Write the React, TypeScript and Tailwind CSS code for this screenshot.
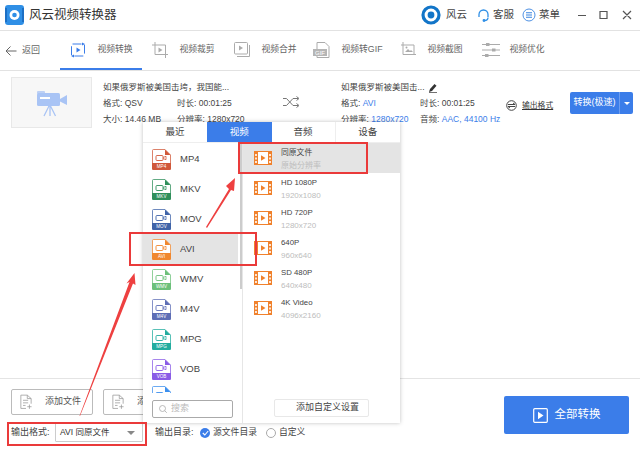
const cjk = "font-['Liberation_Sans','Noto_Sans_CJK_SC',sans-serif]";

function FileIcon({ color, label }: { color: string; label: string }) {
  return (
    <svg width="19" height="21" viewBox="0 0 19 21" className="shrink-0">
      <path d="M.5 1.500a1 1 0 0 1 1-1H13L18.500 6v13.500a1 1 0 0 1-1 1h-16a1 1 0 0 1-1-1Z" fill="#fff" stroke={color} strokeOpacity="0.75" />
      <path d="M13 .5V6h5.500Z" fill={color} />
      <path d="M0 14h19v5.500a1.500 1.500 0 0 1-1.500 1.500h-16A1.500 1.500 0 0 1 0 19.500Z" fill={color} />
      <rect x="4" y="6.500" width="7" height="5" rx="1" fill="none" stroke={color} strokeWidth="0.9" />
      <path d="M11 8.500l3-1.200v3.400l-3-1.200" fill="none" stroke={color} strokeWidth="0.8" />
      <text x="9.500" y="19.300" textAnchor="middle" fontSize="4.600" fill="#fff" fontFamily="Liberation Sans">{label}</text>
    </svg>
  );
}

function FilmIcon() {
  return (
    <svg width="18" height="14" viewBox="0 0 18 14" className="shrink-0">
      <rect x="0.500" y="0.500" width="17" height="13" rx="1" fill="#fff" stroke="#f0812c" />
      <path d="M0 0h4v14H0zM14 0h4v14h-4z" fill="#f0812c" />
      <path d="M1.200 3h1.600v2H1.200zM1.200 6.500h1.600v2H1.200zM1.200 10h1.600v2H1.200zM15.200 3h1.600v2h-1.600zM15.200 6.500h1.600v2h-1.600zM15.200 10h1.600v2h-1.600z" fill="#fff" />
      <path d="M7 4.200l4.500 2.800L7 9.800Z" fill="#f0812c" />
    </svg>
  );
}

function ToolIcon({ kind }: { kind: string }) {
  const c = "#ababab";
  return (
    <svg width="20" height="18" viewBox="0 0 20 18" fill="none" stroke={c} strokeWidth="1" className="shrink-0">
      {kind === "convert" && (<>
        <rect x="2.500" y="3" width="13" height="12" rx="1" stroke="#3b7de9" strokeDasharray="9 3" />
        <path d="M7.500 6.500l4 2.500-4 2.500Z" fill="#3b7de9" stroke="none" />
        <path d="M13 1.500l3 1.500-3 1.500ZM5 13.500l-3 1.500 3 1.500Z" fill="#3b7de9" stroke="none" />
      </>)}
      {kind === "crop" && (<>
        <path d="M4 1v12.500h13M1 4h13.500v13" />
        <path d="M7.500 6.500l4 2.500-4 2.500Z" fill={c} stroke="none" />
      </>)}
      {kind === "merge" && (<>
        <rect x="1.500" y="1.500" width="13" height="11.500" rx="1" />
        <path d="M4 15.500h12.500V4" />
        <path d="M6 4.500l4 2.500-4 2.500Z" fill={c} stroke="none" />
      </>)}
      {kind === "gif" && (<>
        <path d="M4 8V1.500h8l4 4V16.500H4V14" />
        <rect x="0" y="8" width="14" height="7" fill="#b5b5b5" stroke="none" />
        <text x="7" y="14" textAnchor="middle" fontSize="6" fill="#fff" stroke="none" fontFamily="Liberation Sans">GIF</text>
      </>)}
      {kind === "shot" && (<>
        <path d="M4 1v12.500h13M2 4h13v9" />
        <path d="M6 11l3-3 2 2 1-1 2 2Z" fill={c} stroke="none" />
        <circle cx="7.500" cy="6.500" r="1" fill={c} stroke="none" />
      </>)}
      {kind === "opt" && (<>
        <path d="M1 3.500h18M1 9h18M1 14.500h18" />
        <rect x="5" y="2" width="3.500" height="3" fill={c} stroke="none" />
        <rect x="11" y="7.500" width="3.500" height="3" fill={c} stroke="none" />
        <rect x="4" y="13" width="3.500" height="3" fill={c} stroke="none" />
      </>)}
    </svg>
  );
}

function AddFileIcon() {
  return (
    <svg width="12" height="18" viewBox="0 0 14 18" fill="none" stroke="#9a9a9a" strokeWidth="0.9" className="shrink-0">
      <path d="M7 16.500H1V1h7.500L13 5v6" />
      <path d="M8.500 1v4H13M3.500 7h6M3.500 10h6M3.500 13h3M11 12v5M8.500 14.500h5" />
    </svg>
  );
}

const tools = [
  { k: "convert", t: "视频转换", w: "w-[82px]", on: true },
  { k: "crop", t: "视频裁剪", w: "w-[82px]" },
  { k: "merge", t: "视频合并", w: "w-[82px]" },
  { k: "gif", t: "视频转GIF", w: "w-[84px]" },
  { k: "shot", t: "视频截图", w: "w-[82px]" },
  { k: "opt", t: "视频优化", w: "w-[82px]" },
];

const formats = [
  { l: "MP4", c: "#d0583a" },
  { l: "MKV", c: "#2f8f5b" },
  { l: "MOV", c: "#3f63a8" },
  { l: "AVI", c: "#f0872e", on: true },
  { l: "WMV", c: "#6cc07a" },
  { l: "M4V", c: "#5d6db5" },
  { l: "MPG", c: "#22ac9f" },
  { l: "VOB", c: "#8a5ce6" },
];

const presets = [
  { a: "同原文件", b: "原始分辨率", on: true },
  { a: "HD 1080P", b: "1920x1080" },
  { a: "HD 720P", b: "1280x720" },
  { a: "640P", b: "960x640" },
  { a: "SD 480P", b: "640x480" },
  { a: "4K Video", b: "4096x2160" },
];

export default function App() {
  return (
    <div className={`relative w-[640px] h-[450px] overflow-hidden bg-white flex flex-col text-[9px] text-[#444] ${cjk}`}>
      {/* title bar */}
      <header className="h-[31px] shrink-0 flex items-center border-b border-[#e2e2e2] pl-[5px]">
        <svg width="19" height="20" viewBox="0 0 19 20" className="shrink-0">
          <rect width="19" height="20" rx="3" fill="#2f8fe6" />
          <path d="M0 3h2v14H0zM17 3h2v14h-2z" fill="#1c6fc4" />
          <circle cx="9.500" cy="10" r="5" fill="#fff" />
          <circle cx="9.500" cy="10" r="2.300" fill="#2f8fe6" />
        </svg>
        <span className="ml-[5px] text-[12.500px] text-[#333]">风云视频转换器</span>
        <div className="ml-auto flex items-center">
          <svg width="20" height="20" viewBox="0 0 20 20" className="mr-[5px]">
            <circle cx="10" cy="10" r="8" fill="#fff" stroke="#1275c8" strokeWidth="3.200" />
            <circle cx="10" cy="10" r="3.400" fill="#1275c8" />
          </svg>
          <span className="text-[10.500px] mr-[10px]">风云</span>
          <svg width="13" height="14" viewBox="0 0 13 14" fill="none" stroke="#2f8fe6" strokeWidth="1.300" className="mr-[3px]">
            <path d="M2 9V6.500a4.500 4.500 0 0 1 9 0V9" />
            <path d="M11 9.500c0 2-1.500 3-3.500 3" />
            <circle cx="7" cy="12.500" r="0.800" fill="#2f8fe6" />
          </svg>
          <span className="text-[10.500px] mr-[8px]">客服</span>
          <svg width="14" height="14" viewBox="0 0 14 14" fill="none" stroke="#3b85e0" strokeWidth="0.900" className="mr-[3px]">
            <circle cx="7" cy="7" r="6" />
            <path d="M4 4.700h6M4 7h6M4 9.300h6" strokeWidth="1.100" />
          </svg>
          <span className="text-[10.500px] mr-[16px]">菜单</span>
          <svg width="62" height="12" viewBox="0 0 62 12" fill="none" stroke="#555" strokeWidth="1.200" className="mr-[2px]">
            <path d="M2 6.500h8M24 2.500h7v7h-7zM47 2l8 8M55 2l-8 8" />
          </svg>
        </div>
      </header>

      {/* toolbar */}
      <nav className="h-[40px] shrink-0 flex items-stretch border-b border-[#e2e2e2]">
        <div className="w-[60px] flex items-center pl-[5px] gap-[5px] text-[#666]">
          <svg width="12" height="12" viewBox="0 0 12 12" fill="none" stroke="#666" strokeWidth="1">
            <path d="M11.500 6H1M5.500 1.500 1 6l4.500 4.500" />
          </svg>
          <span>返回</span>
        </div>
        {tools.map((t) => (
          <div key={t.k} className={`${t.w} flex items-center justify-center gap-[8px] border-b-2 ${t.on ? "border-[#3b7de9]" : "border-transparent"} text-[#666] text-[8.800px]`}>
            <ToolIcon kind={t.k} />
            <span className="whitespace-nowrap">{t.t}</span>
          </div>
        ))}
      </nav>

      {/* file row */}
      <section className="h-[56px] shrink-0 flex items-start pt-[6px] pl-[11px]">
        <div className="w-[81px] h-[51px] shrink-0 flex items-center justify-center bg-[#f7f7f7] border border-[#e8e8e8]">
          <svg width="32" height="28" viewBox="0 0 32 28">
            <rect x="1" y="2" width="8" height="3" rx="1" fill="#bcd0f5" />
            <rect x="1" y="4" width="23" height="13" rx="1.500" fill="#a9c4f5" />
            <rect x="4" y="8" width="10" height="2" fill="#fff" />
            <path d="M24 10l7-4v10l-7-3.500Z" fill="#a9c4f5" />
            <path d="M12 17h3M13 17l-5 10M14 17v10M14.500 17l5 10" stroke="#a9c4f5" strokeWidth="1.300" fill="none" />
          </svg>
        </div>
        <div className="ml-[11px] w-[172px] shrink-0 flex flex-col gap-[5px] pt-[5px] leading-[11px] text-[8.500px]">
          <div className="whitespace-nowrap">如果俄罗斯被美国击垮，我国能...</div>
          <div className="flex"><span className="w-[74px]">格式: QSV</span><span>时长: 00:01:25</span></div>
          <div className="flex"><span className="w-[74px]">大小: 14.46 MB</span><span>分辨率: 1280x720</span></div>
        </div>
        <div className="w-[32px] shrink-0 pt-[19px] flex justify-center">
          <svg width="17" height="12" viewBox="0 0 17 12" fill="none" stroke="#777" strokeWidth="1">
            <path d="M0 2.500h3.500L10 9.500h5M0 9.500h3.500L10 2.500h5M13.500 .5l2.500 2-2.500 2M13.500 7.500l2.500 2-2.500 2" />
          </svg>
        </div>
        <div className="ml-[34px] w-[165px] shrink-0 flex flex-col gap-[5px] pt-[5px] leading-[11px] text-[8.500px]">
          <div className="flex items-center gap-[4px] whitespace-nowrap">
            如果俄罗斯被美国击...
            <svg width="9" height="10" viewBox="0 0 9 10">
              <path d="M0 9l1-3 4.500-5 2 1.800L3 8Z" fill="#333" />
              <path d="M0 9.500h8" stroke="#333" strokeWidth="0.700" />
            </svg>
          </div>
          <div className="flex"><span className="w-[79px]">格式: <span className="text-[#3b7de9]">AVI</span></span><span>时长: 00:01:25</span></div>
          <div className="flex"><span className="w-[79px] whitespace-nowrap">分辨率: <span className="text-[#3b7de9]">1280x720</span></span><span className="whitespace-nowrap">音频: <span className="text-[#3b7de9]">AAC, 44100 Hz</span></span></div>
        </div>
        <div className="flex items-center gap-[5px] pt-[21px] h-[36px] w-[57px] shrink-0 text-[#333] text-[7.800px]">
          <svg width="11" height="11" viewBox="0 0 11 11" fill="none" stroke="#444" strokeWidth="1" className="shrink-0">
            <circle cx="5.500" cy="5.500" r="4.800" />
            <path d="M2 4.500h7L7 3M9 6.500H2L4 8" />
          </svg>
          <span className="underline whitespace-nowrap">输出格式</span>
        </div>
        <div className="mt-[15px] ml-[7px] w-[63px] h-[22px] shrink-0 flex rounded-[2px] overflow-hidden bg-[#3b7de9] text-white text-[9px]">
          <div className="w-[50px] flex items-center justify-center whitespace-nowrap border-r border-[#6c9df0]">转换(极速)</div>
          <div className="flex-1 flex items-center justify-center">
            <div className="w-0 h-0 border-x-[3px] border-x-transparent border-t-[3px] border-t-white" />
          </div>
        </div>
      </section>

      <div className="flex-1" />

      {/* bottom */}
      <footer className="h-[72px] shrink-0 border-t border-[#e4e4e4] flex">
        <div className="w-[504px] pl-[11px] pt-[10px]">
          <div className="flex gap-[10px] h-[26px]">
            <div className="w-[82px] flex items-center gap-[13px] pl-[8px] border border-[#bbb] rounded-[2px]">
              <AddFileIcon />
              <span className="text-[#555]">添加文件</span>
            </div>
            <div className="w-[82px] flex items-center gap-[13px] pl-[8px] border border-[#bbb] rounded-[2px]">
              <AddFileIcon />
              <span className="text-[#555] whitespace-nowrap w-[10px] overflow-hidden">添</span>
            </div>
          </div>
          <div className="flex items-center mt-[8px] h-[19px]">
            <span className="w-[44px] text-[#444]">输出格式:</span>
            <div className="w-[88px] h-[19px] flex items-center justify-between pl-[4px] pr-[7px] border border-[#ccc] rounded-[1px] text-[#333] whitespace-nowrap text-[8.500px]">
              AVI 同原文件
              <div className="w-0 h-0 border-x-[4px] border-x-transparent border-t-[4px] border-t-[#888]" />
            </div>
            <span className="ml-[12px] w-[45px] text-[#444]">输出目录:</span>
            <div className="w-[10px] h-[10px] rounded-full bg-[#3b7de9] flex items-center justify-center">
              <svg width="7" height="6" viewBox="0 0 7 6" fill="none" stroke="#fff" strokeWidth="1.100"><path d="M.8 3l2 2L6.200 1" /></svg>
            </div>
            <span className="ml-[3px] w-[44px] whitespace-nowrap text-[8.800px]">源文件目录</span>
            <div className="ml-[9px] w-[10px] h-[10px] rounded-full border border-[#aaa]" />
            <span className="ml-[3px] text-[8.800px]">自定义</span>
          </div>
        </div>
        <div className="mt-[17px] w-[125px] h-[38px] rounded-[2px] bg-[#3b7de9] text-white text-[11.500px] flex items-center justify-center gap-[7px]">
          <svg width="15" height="15" viewBox="0 0 15 15" fill="none">
            <rect x="0.700" y="0.700" width="13.600" height="13.600" rx="1" stroke="#fff" strokeWidth="1.200" />
            <path d="M5 3.800l5.500 3.700L5 11.200Z" fill="#fff" />
          </svg>
          全部转换
        </div>
      </footer>

      {/* format dropdown */}
      <div className="absolute left-[143px] top-[122px] w-[257px] h-[301px] bg-white shadow-[0_0_4px_rgba(0,0,0,0.25)] flex flex-col">
        <div className="h-[21px] shrink-0 grid grid-cols-4 border-b border-[#eee] text-[9.500px] text-[#444]">
          <div className="flex items-center justify-center">最近</div>
          <div className="flex items-center justify-center bg-[#3b7de9] text-white">视频</div>
          <div className="flex items-center justify-center border-r border-[#eee]">音频</div>
          <div className="flex items-center justify-center">设备</div>
        </div>
        <div className="flex-1 flex min-h-0">
          <div className="w-[100px] shrink-0 flex flex-col border-r border-[#e6e6e6] relative">
            <div className="absolute right-0 top-0 w-[2px] h-[146px] bg-[#ccc]" />
            <div className="h-[250px] overflow-hidden pt-[1px]">
              {formats.map((f) => (
                <div key={f.l} className={`h-[30px] w-[95px] flex items-center pl-[9px] gap-[9px] text-[9.500px] text-[#444] ${f.on ? "bg-[#e4e4e4]" : ""}`}>
                  <FileIcon color={f.c} label={f.l} />
                  {f.l}
                </div>
              ))}
              <div className="h-[30px] pl-[9px] pt-[2px]">
                <FileIcon color="#3b8fee" label="" />
              </div>
            </div>
            <div className="flex-1 pl-[9px] pt-[7px]">
              <div className="w-[81px] h-[18px] flex items-center gap-[4px] pl-[6px] border border-[#aaa] rounded-[2px] text-[#bbb]">
                <svg width="8" height="8" viewBox="0 0 8 8" fill="none" stroke="#aaa" strokeWidth="0.800"><circle cx="3.500" cy="3.500" r="3" /><path d="M5.700 5.700 7.800 7.800" /></svg>
                搜索
              </div>
            </div>
          </div>
          <div className="flex-1 flex flex-col min-w-0">
            {presets.map((p) => (
              <div key={p.a} className={`h-[30px] shrink-0 flex items-center pl-[11px] gap-[9px] ${p.on ? "bg-[#e4e4e4]" : ""}`}>
                <FilmIcon />
                <div className="flex flex-col leading-[13px] pt-[1px] text-[7.800px] whitespace-nowrap">
                  <span className="text-[#444]">{p.a}</span>
                  <span className="text-[#bdbdbd] text-[8px]">{p.b}</span>
                </div>
              </div>
            ))}
            <div className="mt-auto mb-[6px] ml-[31px] w-[95px] h-[18px] flex items-center justify-center border border-[#e8e8e8] rounded-[2px] text-[#444] pl-[12px]">
              添加自定义设置
            </div>
          </div>
        </div>
      </div>

      {/* red annotations */}
      <div className="absolute left-[238px] top-[142px] w-[130px] h-[32px] border-2 border-[#ea3a3a]" />
      <div className="absolute left-[129px] top-[232px] w-[128px] h-[34px] border-2 border-[#ea3a3a]" />
      <div className="absolute left-[7px] top-[422px] w-[140px] h-[24px] border-2 border-[#ea3a3a]" />
      <svg width="640" height="450" viewBox="0 0 640 450" className="absolute left-0 top-0 pointer-events-none">
        <path d="M79.500 416 129.500 282 126.500 283.500 134.500 273 135.500 285 133 283.500 80 416Z" fill="#ee4040" />
        <path d="M206 227 229 189 226 186 235 178 234 191 231 190 207 228Z" fill="#ee4040" />
      </svg>
    </div>
  );
}
